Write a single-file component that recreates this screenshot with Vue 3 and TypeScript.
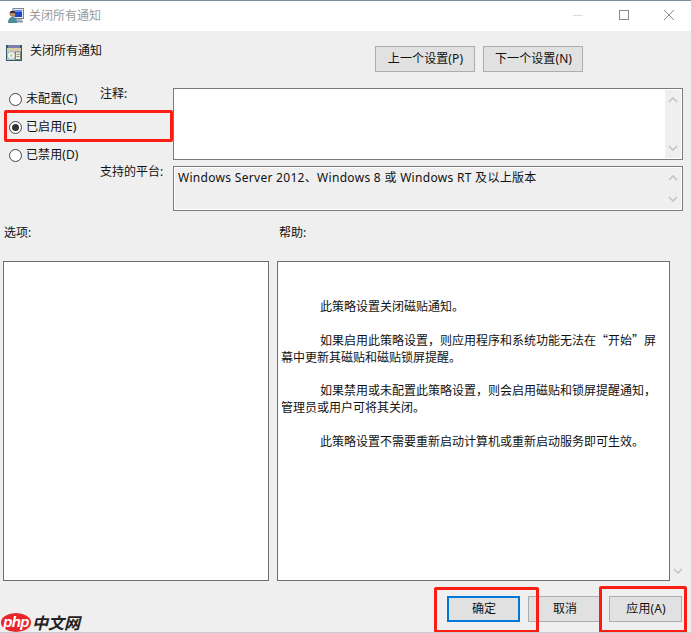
<script setup lang="ts">
const paragraphs = [
  { id: 1, text: '此策略设置关闭磁贴通知。' },
  { id: 2, text: '如果启用此策略设置，则应用程序和系统功能无法在“开始”屏幕中更新其磁贴和磁贴锁屏提醒。' },
  { id: 3, text: '如果禁用或未配置此策略设置，则会启用磁贴和锁屏提醒通知，管理员或用户可将其关闭。' },
  { id: 4, text: '此策略设置不需要重新启动计算机或重新启动服务即可生效。' },
]
const radios = [
  { id: 'c', label: '未配置(C)', on: false },
  { id: 'e', label: '已启用(E)', on: true },
  { id: 'd', label: '已禁用(D)', on: false },
]
</script>

<template>
  <div class="window">
    <header class="titlebar">
      <svg class="title-icon" width="16" height="16" viewBox="0 0 16 16">
        <rect x="5" y="0.5" width="10.5" height="10" fill="#e4e8ee" stroke="#7d8794" />
        <rect x="6.5" y="2" width="7.5" height="7" fill="#1c46c4" />
        <rect x="6.5" y="2" width="7.5" height="2" fill="#5f8cee" />
        <rect x="8" y="11" width="6" height="2" fill="#aeb6c0" />
        <rect x="6" y="13" width="9" height="1.5" fill="#8e98a4" />
        <circle cx="4.5" cy="6" r="2.8" fill="#b98a66" />
        <path d="M1.7 5.6C1.7 3.4 3 2.8 4.5 2.8s2.8.7 2.8 2.6c-1.4-.9-4-.9-5.6.2z" fill="#2d2420" />
        <path d="M0 15c0-4 2-6 4.5-6S9 11 9 15z" fill="#4d8a9a" />
      </svg>
      <span class="title-text">关闭所有通知</span>
      <div class="win-controls">
        <svg width="12" height="12" viewBox="0 0 12 12"><path d="M1 6.5h10" stroke="#dcdcdc" /></svg>
        <svg width="12" height="12" viewBox="0 0 12 12"><rect x="1.5" y="1.5" width="9" height="9" fill="none" stroke="#8a8a8a" /></svg>
        <svg width="12" height="12" viewBox="0 0 12 12"><path d="M1 1l10 10M11 1L1 11" stroke="#8a8a8a" /></svg>
      </div>
    </header>

    <section class="head">
      <svg class="head-icon" width="16" height="16" viewBox="0 0 16 16">
        <rect x="0" y="0" width="16" height="16" fill="#2f5a66" />
        <rect x="2" y="0" width="12" height="3" fill="#7d7fa8" />
        <rect x="1" y="3" width="14" height="2" fill="#d8cf9a" />
        <rect x="1" y="5" width="14" height="10" fill="#c9cbc4" />
        <circle cx="5.2" cy="10.5" r="4" fill="#eef0ea" stroke="#8c9296" stroke-width="0.6" />
        <circle cx="5.2" cy="10.5" r="1.2" fill="#a8d890" />
        <rect x="9.5" y="7" width="5" height="7.5" fill="#f8f4dc" stroke="#4a5a60" stroke-width="0.7" />
        <path d="M10.5 9.5h3M10.5 11.5h3" stroke="#4a5a60" stroke-width="0.7" />
      </svg>
      <span class="head-text">关闭所有通知</span>
      <div class="nav">
        <button class="btn nav-btn" type="button">上一个设置(P)</button>
        <button class="btn nav-btn" type="button">下一个设置(N)</button>
      </div>
    </section>

    <section class="config">
      <div class="radios">
        <label v-for="r in radios" :key="r.id" class="radio">
          <span class="dot" :class="{ on: r.on }"></span>
          <span>{{ r.label }}</span>
        </label>
      </div>
      <div class="fields">
        <div class="field note-field">
          <span class="field-label">注释:</span>
          <div class="box white">
            <div class="scroll">
              <svg width="10" height="6" viewBox="0 0 10 6"><path d="M1 5l4-4 4 4" fill="none" stroke="#c4c4c4" stroke-width="1.6" /></svg>
              <svg width="10" height="6" viewBox="0 0 10 6"><path d="M1 1l4 4 4-4" fill="none" stroke="#c4c4c4" stroke-width="1.6" /></svg>
            </div>
          </div>
        </div>
        <div class="field platform-field">
          <span class="field-label">支持的平台:</span>
          <div class="box grey">
            <span class="platform-text">Windows Server 2012、Windows 8 或 Windows RT 及以上版本</span>
            <div class="scroll">
              <svg width="10" height="6" viewBox="0 0 10 6"><path d="M1 5l4-4 4 4" fill="none" stroke="#c4c4c4" stroke-width="1.6" /></svg>
              <svg width="10" height="6" viewBox="0 0 10 6"><path d="M1 1l4 4 4-4" fill="none" stroke="#c4c4c4" stroke-width="1.6" /></svg>
            </div>
          </div>
        </div>
      </div>
    </section>

    <section class="captions">
      <span class="cap-left">选项:</span>
      <span class="cap-right">帮助:</span>
    </section>

    <section class="panels">
      <div class="panel options"></div>
      <div class="panel help">
        <p v-for="p in paragraphs" :key="p.id">{{ p.text }}</p>
      </div>
      <div class="outer-scroll">
        <svg width="10" height="6" viewBox="0 0 10 6"><path d="M1 1l4 4 4-4" fill="none" stroke="#c4c4c4" stroke-width="1.6" /></svg>
      </div>
    </section>

    <footer class="footer">
      <div class="brand">
        <span class="php">php</span>
        <span class="cn">中文网</span>
      </div>
      <div class="actions">
        <button class="btn act primary" type="button">确定</button>
        <button class="btn act" type="button">取消</button>
        <button class="btn act" type="button">应用(A)</button>
      </div>
    </footer>

    <div class="mark mark-radio"></div>
    <div class="mark mark-ok"></div>
    <div class="mark mark-apply"></div>
  </div>
</template>

<style>
html, body { margin: 0; padding: 0; background: #efefef; }
</style>

<style scoped>
.window {
  position: relative;
  box-sizing: border-box;
  width: 691px;
  height: 633px;
  overflow: hidden;
  display: flex;
  flex-direction: column;
  background: #efefef;
  border-bottom: 1px solid #c6ced6;
  color: #111;
  font: 12px/16px "Noto Sans", "Noto Sans CJK SC", sans-serif;
}
.titlebar {
  box-sizing: border-box;
  height: 31px;
  flex: none;
  display: flex;
  align-items: center;
  background: #fff;
  border-top: 1px solid #7d8c9b;
  padding-left: 8px;
}
.title-icon { flex: none; margin-right: 5px; }
.title-text { color: #9a9a9a; font-size: 12px; }
.win-controls {
  margin-left: auto;
  display: flex;
  gap: 33.5px;
  padding: 0 16px 2px 0;
  align-items: center;
}
.head {
  box-sizing: border-box;
  height: 57px;
  flex: none;
  display: flex;
  padding-left: 6px;
}
.head-icon { margin-top: 14px; flex: none; }
.head-text { margin: 12px 0 0 8px; }
.nav { margin-left: auto; display: flex; gap: 8px; padding: 15px 108px 0 0; }
.btn {
  box-sizing: border-box;
  height: 26px;
  padding: 0 0 0 1px;
  background: #e1e1e1;
  border: 1px solid #adadad;
  color: #111;
  font: inherit;
  letter-spacing: 0.1px;
}
.nav-btn { width: 100px; }
.config { height: 123px; flex: none; display: flex; }
.radios { width: 100px; flex: none; display: flex; flex-direction: column; gap: 12px; padding: 3px 0 0 9px; box-sizing: border-box; }
.radio { display: flex; align-items: center; gap: 4px; height: 16px; letter-spacing: 0.1px; }
.dot {
  box-sizing: border-box;
  width: 13px;
  height: 13px;
  border: 1px solid #444;
  border-radius: 50%;
  background: #fff;
  display: flex;
  align-items: center;
  justify-content: center;
}
.dot.on::after { content: ""; width: 7px; height: 7px; border-radius: 50%; background: #333; }
.fields { flex: 1; display: flex; flex-direction: column; gap: 6px; }
.field { display: flex; }
.field-label { width: 73px; flex: none; margin-top: -2px; }
.note-field { height: 72px; }
.platform-field { height: 45px; }
.box {
  box-sizing: border-box;
  width: 510px;
  border: 1px solid #7a7a7a;
  position: relative;
}
.white { background: #fff; }
.grey { background: #efefef; box-shadow: inset -1px -1px 0 #fff, inset 1px 1px 0 #fff; }
.platform-text { position: absolute; left: 4px; top: 3px; white-space: nowrap; letter-spacing: 0.3px; }
.scroll {
  position: absolute;
  right: 1px;
  top: 1px;
  bottom: 1px;
  width: 16px;
  background: #efefef;
  display: flex;
  flex-direction: column;
  align-items: center;
  justify-content: space-between;
  padding: 7px 0;
  box-sizing: border-box;
}
.captions { height: 50px; flex: none; display: flex; }
.cap-left { margin: 14px 0 0 4px; width: 275px; }
.cap-right { margin-top: 14px; }
.panels { height: 320px; flex: none; display: flex; padding-left: 3px; position: relative; }
.panel { box-sizing: border-box; height: 320px; background: #fff; border: 1px solid #6e6e6e; }
.options { width: 266px; margin-right: 8px; }
.help { width: 393px; padding: 35px 3px 0 3px; font-family: "Noto Sans CJK SC", sans-serif; }
.help p { margin: 0 0 16.5px; text-indent: 39px; line-height: 17px; }
.outer-scroll { position: absolute; right: 8px; bottom: 3px; }
.footer { flex: 1; display: flex; justify-content: space-between; }
.brand { display: flex; align-items: center; height: 20px; margin-top: 31px; padding-left: 1px; }
.php {
  width: 30px;
  height: 19px;
  border-radius: 50%;
  background: #e8252a;
  color: #fff;
  font: italic 700 15px/17px "Liberation Sans", sans-serif;
  letter-spacing: -0.6px;
  text-align: center;
}
.cn { margin-left: 1px; font: italic 700 16px/18px "Noto Sans CJK SC", sans-serif; color: #222; }
.actions { display: flex; gap: 8px; padding: 15px 9px 0 0; align-items: flex-start; }
.act { width: 73px; }
.primary { border: 2px solid #0078d7; }
.mark { position: absolute; box-sizing: border-box; border: 3px solid #fb1c14; border-radius: 2px; }
.mark-radio { left: 4px; top: 110px; width: 169px; height: 32px; }
.mark-ok { left: 434px; top: 587px; width: 105px; height: 46px; }
.mark-apply { left: 599px; top: 586px; width: 88px; height: 47px; }
</style>
